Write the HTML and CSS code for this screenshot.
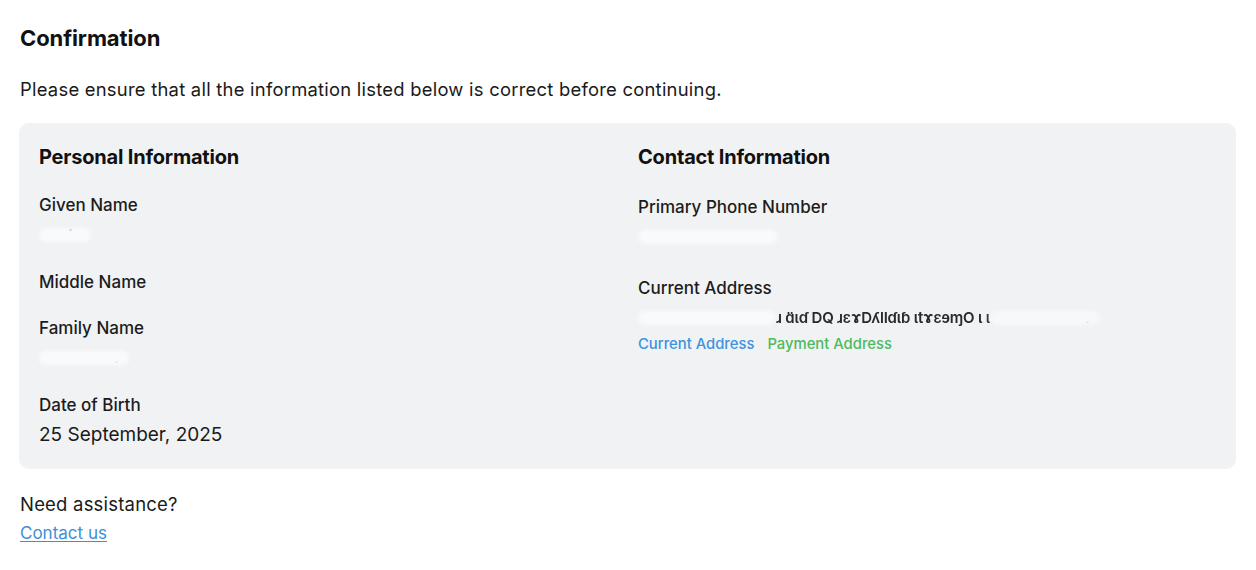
FILE: index.html
```html
<!DOCTYPE html>
<html lang="en">
<head>
<meta charset="utf-8">
<title>Confirmation</title>
<link rel="stylesheet" href="styles.css">
</head>
<body>
<main class="page">
  <h1 class="title">Confirmation</h1>
  <p class="intro">Please ensure that all the information listed below is correct before continuing.</p>

  <section class="card">
    <div class="col col-personal">
      <h2 class="col-title">Personal Information</h2>
      <div class="fields">
        <div class="field">
          <div class="label">Given Name</div>
          <div class="value"><span class="redact" style="width:52px"></span><span class="dot dot-up"></span></div>
        </div>
        <div class="field">
          <div class="label">Middle Name</div>
        </div>
        <div class="field">
          <div class="label">Family Name</div>
          <div class="value"><span class="redact" style="width:90px"></span><span class="dot"></span></div>
        </div>
        <div class="field">
          <div class="label">Date of Birth</div>
          <div class="value">25 September, 2025</div>
        </div>
      </div>
    </div>

    <div class="col col-contact">
      <h2 class="col-title">Contact Information</h2>
      <div class="fields">
        <div class="field">
          <div class="label">Primary Phone Number</div>
          <div class="value"><span class="redact" style="width:140px"></span></div>
        </div>
        <div class="field">
          <div class="label">Current Address</div>
          <div class="value address"><span class="redact" style="width:138px"></span><span class="garble">ɹ ɑ̈ɩɗ DQ ɹɛɤDʎlIɗɩɓ ɩtɤɛɘɱO ɩ ɩ</span><span class="redact light" style="width:110px"></span><span class="dot"></span></div>
          <div class="tags">
            <span class="tag tag-current">Current Address</span>
            <span class="tag tag-payment">Payment Address</span>
          </div>
        </div>
      </div>
    </div>
  </section>

  <div class="help">
    <p class="help-text">Need assistance?</p>
    <a class="help-link" href="#">Contact us</a>
  </div>
</main>
</body>
</html>
```

FILE: styles.css
```css
* { box-sizing: border-box; }

html, body {
  margin: 0;
  padding: 0;
  background: #ffffff;
}

body {
  font-family: Inter, "Noto Sans", "Liberation Sans", sans-serif;
  color: #111111;
}

.page {
  padding: 24px 20px 20px 19px;
}

.title {
  margin: 0 0 0 1px;
  font-size: 22px;
  line-height: 28px;
  font-weight: 700;
  letter-spacing: -0.1px;
}

.intro {
  margin: 24px 0 0 1px;
  font-size: 18.4px;
  line-height: 26px;
  font-weight: 400;
  letter-spacing: 0.25px;
  color: #1a1a1a;
}

.card {
  margin-top: 21px;
  width: 1217px;
  background: #f1f2f4;
  border-radius: 10px;
  padding: 21px 20px 21px 20px;
  display: grid;
  grid-template-columns: 599px 1fr;
}

.col-title {
  margin: 0;
  font-size: 20px;
  line-height: 26px;
  font-weight: 700;
  letter-spacing: -0.2px;
}

.fields {
  display: flex;
  flex-direction: column;
}

.col-personal .fields {
  margin-top: 23px;
  gap: 22px;
}

.col-contact .fields {
  margin-top: 25px;
  gap: 26px;
}

.label {
  font-size: 17px;
  line-height: 24px;
  font-weight: 500;
  color: #1c1c1c;
}

.value {
  margin-top: 5px;
  font-size: 19px;
  line-height: 26px;
  font-weight: 400;
  height: 26px;
  display: flex;
  align-items: center;
  color: #1a1a1a;
}

.redact {
  display: inline-block;
  height: 14px;
  background: #f9fafb;
  border-radius: 7px;
  filter: blur(2px);
}

.redact.light {
  background: #f7f8f9;
}

.dot {
  display: inline-block;
  width: 3px;
  height: 3px;
  border-radius: 50%;
  background: #444;
  margin-left: -14px;
  margin-top: 6px;
}

.dot-up {
  margin-left: -22px;
  margin-top: -10px;
}

.address {
  font-size: 15px;
}

.garble {
  font-size: 15px;
  font-weight: 600;
  letter-spacing: -0.2px;
  color: #2a2a2a;
  filter: blur(0.5px);
  white-space: nowrap;
}

.tags {
  margin-top: 3px;
  display: flex;
  gap: 13px;
  font-size: 14.8px;
  line-height: 20px;
  font-weight: 500;
}

.tag-current { color: #3d93dd; }
.tag-payment { color: #4cbb5c; }

.help {
  margin-top: 22px;
  margin-left: 1px;
}

.help-text {
  margin: 0;
  font-size: 18.5px;
  line-height: 26px;
  letter-spacing: 0.2px;
  color: #1a1a1a;
}

.help-link {
  display: inline-block;
  margin-top: 4px;
  font-size: 17px;
  line-height: 24px;
  color: #3d8fd6;
  text-decoration: underline;
  text-underline-offset: 2px;
}
```
